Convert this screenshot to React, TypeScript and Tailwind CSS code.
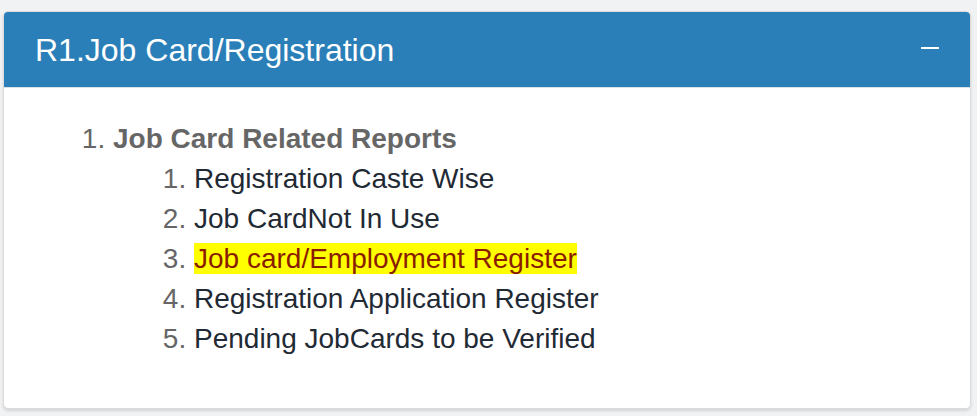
export default function App() {
  const reports = [
    { label: "Registration Caste Wise" },
    { label: "Job CardNot In Use" },
    { label: "Job card/Employment Register", active: true },
    { label: "Registration Application Register" },
    { label: "Pending JobCards to be Verified" },
  ];

  return (
    <div className="min-h-[416px] bg-[#f1f2f3] pt-[11px] pl-[3px] pr-[6px] font-['Liberation_Sans',Arial,sans-serif]">
      <div className="overflow-hidden rounded-[5px] border border-[#dcdcdc] bg-white shadow-[0_2px_3px_rgba(0,0,0,0.12)]">
        <div className="flex h-[76px] items-center justify-between border-b border-[#d9e2ea] bg-[#2a7fb8] pl-[31px] pr-[31px] text-white">
          <h3 className="text-[32px] leading-none">R1.Job Card/Registration</h3>
          <span className="mb-[4px] block h-[2px] w-[18px] bg-white" />
        </div>
        <div className="pt-[31px] pb-[49px]">
          <ol className="list-decimal pl-[109px] text-[28px] leading-[40px] text-[#666]">
            <li>
              <b>Job Card Related Reports</b>
              <ol className="list-decimal pl-[81px] text-[#666]">
                {reports.map((r) => (
                  <li key={r.label}>
                    {r.active ? (
                      <span className="bg-[#ffff00] text-[#8a1c00]">{r.label}</span>
                    ) : (
                      <span className="text-[#1f2a35]">{r.label}</span>
                    )}
                  </li>
                ))}
              </ol>
            </li>
          </ol>
        </div>
      </div>
    </div>
  );
}
